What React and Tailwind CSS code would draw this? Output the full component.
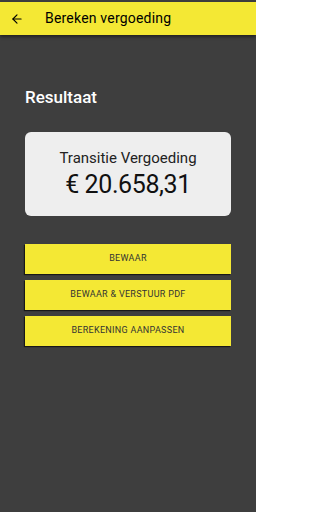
import { ArrowLeft } from "lucide-react";

const buttons = ["BEWAAR", "BEWAAR & VERSTUUR PDF", "BEREKENING AANPASSEN"];

export default function App() {
  return (
    <div className="w-[256px] h-[512px] bg-[#3e3e3e] flex flex-col font-['Roboto',sans-serif] overflow-hidden">
      {/* status strip + app bar */}
      <div className="h-[2px] bg-[#3e3e3e]" />
      <div className="h-[33px] bg-[#f4e834] flex items-center shadow-[0_2px_3px_rgba(0,0,0,0.45)]">
        <ArrowLeft className="ml-[10px] w-[14px] h-[14px] text-black" strokeWidth={2} />
        <span className="ml-[21px] text-[14px] text-black tracking-[0.2px]">Bereken vergoeding</span>
      </div>

      <div className="px-[25px] flex flex-col">
        <h1 className="mt-[52px] text-[17px] font-medium text-white leading-[20px]">Resultaat</h1>

        <div className="mt-[25px] h-[84px] rounded-[6px] bg-[#eeeeee] flex flex-col items-center justify-center">
          <span className="text-[15px] text-[#222] leading-[18px]">Transitie Vergoeding</span>
          <span className="mt-[3px] text-[25px] text-[#111] leading-[30px] tracking-[-0.4px]">€ 20.658,31</span>
        </div>

        <div className="mt-[28px] flex flex-col gap-[6px]">
          {buttons.map((b) => (
            <button
              key={b}
              className="h-[30px] bg-[#f4e834] text-[#333] text-[9px] tracking-[0.3px] shadow-[-1px_1px_1px_rgba(0,0,0,0.6)]"
            >
              {b}
            </button>
          ))}
        </div>
      </div>
    </div>
  );
}
